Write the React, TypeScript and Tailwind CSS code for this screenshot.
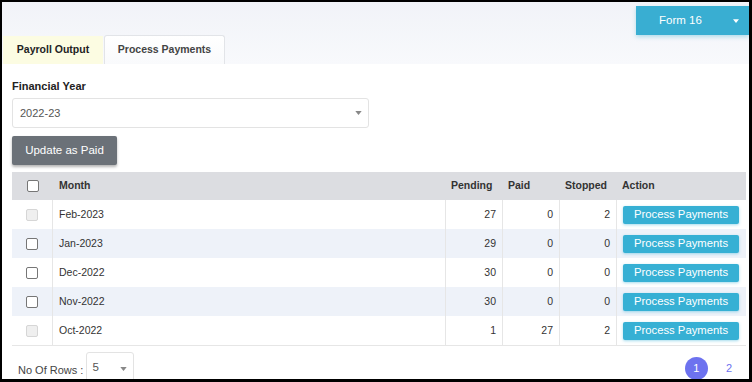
import React from 'react';

interface Row {
  month: string;
  pending: number;
  paid: number;
  stopped: number;
  disabled?: boolean;
}

const ROWS: Row[] = [
  { month: 'Feb-2023', pending: 27, paid: 0, stopped: 2, disabled: true },
  { month: 'Jan-2023', pending: 29, paid: 0, stopped: 0 },
  { month: 'Dec-2022', pending: 30, paid: 0, stopped: 0 },
  { month: 'Nov-2022', pending: 30, paid: 0, stopped: 0 },
  { month: 'Oct-2022', pending: 1, paid: 27, stopped: 2, disabled: true },
];

const Caret = ({ className = '' }: { className?: string }) => (
  <svg width="8" height="5" viewBox="0 0 8 5" className={className}>
    <path d="M0 0h8L4 5z" fill="currentColor" />
  </svg>
);

const Checkbox = ({ disabled }: { disabled?: boolean }) => (
  <div
    className={`w-[12px] h-[12px] rounded-[2px] border ${
      disabled ? 'border-[#d6d6d6] bg-[#efefef]' : 'border-[#767676] bg-white'
    }`}
  />
);

const GRID = 'grid grid-cols-[41px_393px_57px_57px_57px_129px]';

export default function App() {
  return (
    <div className="w-[752px] h-[382px] overflow-hidden bg-white border-black border-l-2 border-t-2 border-r-[3px] border-b-[3px] font-['Liberation_Sans',Arial,sans-serif] text-[#333] flex flex-col">
      {/* top bar */}
      <div className="h-[62px] shrink-0 bg-gradient-to-b from-[#f1f3f8] to-[#f8f9fc] flex flex-col">
        <div className="flex justify-end pt-[4px]">
          <button className="h-[29px] w-[113px] flex items-center bg-[#39aed2] text-white text-[11.5px] shadow-[0_2px_4px_rgba(57,174,210,0.35)]">
            <span className="w-[89px] text-center">Form 16</span>
            <span className="flex-1 flex justify-center pr-[2px]">
              <Caret className="w-[6px] h-[4px]" />
            </span>
          </button>
        </div>
        <div className="flex items-end mt-auto">
          <div className="h-[28px] w-[100px] ml-[1px] flex items-center justify-center bg-[#fcfce2] text-[10.5px] font-bold text-[#222]">
            Payroll Output
          </div>
          <div className="h-[29px] w-[121px] ml-[1px] flex items-center justify-center rounded-t-[3px] border border-b-0 border-[#e2e4e8] bg-gradient-to-b from-white to-[#f9fafc] text-[10.5px] font-bold text-[#444]">
            Process Payments
          </div>
        </div>
      </div>

      {/* content */}
      <div className="flex-1 flex flex-col px-[10px] pt-[15px]">
        <label className="text-[11px] font-bold text-[#222] leading-[14px]">Financial Year</label>
        <div className="mt-[5px] h-[30px] w-[357px] flex items-center justify-between border border-[#e3e3e3] rounded-[3px] pl-[7px] pr-[6px] text-[11px] text-[#555]">
          <span>2022-23</span>
          <Caret className="text-[#888] w-[7px] h-[4px]" />
        </div>
        <button className="mt-[8px] h-[29px] w-[105px] rounded-[2px] bg-[#6b7178] text-white text-[11.5px] shadow-[0_2px_3px_rgba(0,0,0,0.3)]">
          Update as Paid
        </button>

        {/* table */}
        <div className="mt-[7px] w-[734px] border-b border-[#e6e6e6]">
          <div className={`${GRID} h-[28px] bg-[#dcdde1] text-[10.5px] font-bold text-[#333]`}>
            <div className="flex items-center justify-center">
              <Checkbox />
            </div>
            <div className="flex items-center px-[6px]">Month</div>
            <div className="flex items-center px-[5px]">Pending</div>
            <div className="flex items-center px-[5px]">Paid</div>
            <div className="flex items-center px-[5px]">Stopped</div>
            <div className="flex items-center px-[5px]">Action</div>
          </div>
          {ROWS.map((r, i) => (
            <div
              key={r.month}
              className={`${GRID} h-[29px] text-[10.5px] ${i % 2 === 1 ? 'bg-[#eef2f9]' : 'bg-white'}`}
            >
              <div className="flex items-center justify-center border-r border-[#e6e6e6]">
                <Checkbox disabled={r.disabled} />
              </div>
              <div className="flex items-center px-[6px] border-r border-[#e6e6e6]">{r.month}</div>
              <div className="flex items-center justify-end px-[6px] border-r border-[#e6e6e6]">{r.pending}</div>
              <div className="flex items-center justify-end px-[6px] border-r border-[#e6e6e6]">{r.paid}</div>
              <div className="flex items-center justify-end px-[6px] border-r border-[#e6e6e6]">{r.stopped}</div>
              <div className="flex items-center pl-[6px]">
                <button className="h-[18px] w-[116px] rounded-[2px] bg-[#36b0d4] text-white text-[11.3px] shadow-[0_1px_3px_rgba(54,176,212,0.45)]">
                  Process Payments
                </button>
              </div>
            </div>
          ))}
        </div>

        {/* footer */}
        <div className="mt-[6px] w-[734px] flex items-start justify-between">
          <div className="flex items-center pl-[6px]">
            <span className="text-[11px] text-[#444] mt-[5px]">No Of Rows :</span>
            <div className="ml-[3px] h-[32px] w-[48px] flex items-center justify-between border border-[#e3e3e3] rounded-[3px] pl-[5px] pr-[6px] text-[11.5px] text-[#555]">
              <span>5</span>
              <Caret className="text-[#888] w-[7px] h-[4px] mt-[2px]" />
            </div>
          </div>
          <div className="flex items-center gap-[18px] pt-[5px] pr-[14px]">
            <span className="w-[23px] h-[23px] rounded-full bg-[#6d72ef] text-white text-[11px] flex items-center justify-center">
              1
            </span>
            <span className="text-[11px] text-[#6d72ef]">2</span>
          </div>
        </div>
      </div>
    </div>
  );
}
